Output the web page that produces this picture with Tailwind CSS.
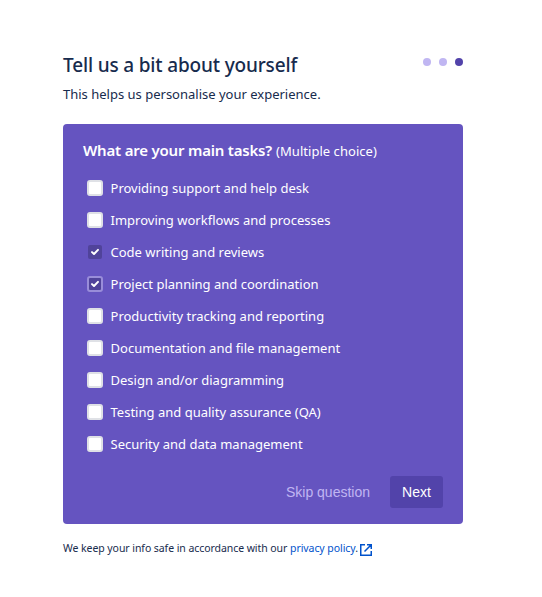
<!DOCTYPE html>
<html lang="en">
<head>
<meta charset="utf-8">
<title>Tell us a bit about yourself</title>
<script src="https://cdn.jsdelivr.net/npm/@tailwindcss/browser@4"></script>
</head>
<body class="bg-white text-[#172b4d] font-['Noto_Sans','Open_Sans',sans-serif]">
<main class="ml-[63px] w-[400px] pt-[53px]">
  <header class="flex h-6 items-start justify-between">
    <h1 class="whitespace-nowrap text-[19px] font-medium leading-6 tracking-[-0.16px]">Tell us a bit about yourself</h1>
    <div class="flex gap-2 pt-[5px]">
      <i class="size-2 rounded-full bg-[#c0b6f2]"></i>
      <i class="size-2 rounded-full bg-[#c0b6f2]"></i>
      <i class="size-2 rounded-full bg-[#5243aa]"></i>
    </div>
  </header>
  <p class="mt-[7px] h-5 whitespace-nowrap text-[13px] leading-5">This helps us personalise your experience.</p>
  <section class="mt-5 flex h-[400px] flex-col rounded-[4px] bg-[#6554c0] px-5 pt-4 pb-4 text-white">
    <h2 class="flex h-5 items-baseline gap-1 whitespace-nowrap leading-5"><span class="text-[15px] font-semibold tracking-[-0.2px]">What are your main tasks?</span><span class="text-[13px] tracking-[0.04px]">(Multiple choice)</span></h2>
    <div class="mt-3 flex flex-col pl-1 text-[13px] tracking-[0.01px] [&_label>span:last-child]:pt-0.5">
      <label class="flex h-8 items-center gap-[7.5px]"><span class="size-4 rounded-[3px] border-2 border-[#dfe1e6] bg-white"></span><span>Providing support and help desk</span></label>
      <label class="flex h-8 items-center gap-[7.5px]"><span class="size-4 rounded-[3px] border-2 border-[#dfe1e6] bg-white"></span><span>Improving workflows and processes</span></label>
      <label class="flex h-8 items-center gap-[7.5px]"><svg class="size-4" viewBox="0 0 16 16" fill="none"><rect x="1" y="1" width="14" height="14" rx="2" fill="#50439a"/><path d="M5 8.1 7 10l4-4.1" stroke="#fff" stroke-width="2" stroke-linecap="round" stroke-linejoin="round"/></svg><span>Code writing and reviews</span></label>
      <label class="flex h-8 items-center gap-[7.5px]"><svg class="size-4" viewBox="0 0 16 16" fill="none"><rect x="1" y="1" width="14" height="14" rx="2" fill="#50439a" stroke="#998dd9" stroke-width="2"/><path d="M5 8.1 7 10l4-4.1" stroke="#fff" stroke-width="2" stroke-linecap="round" stroke-linejoin="round"/></svg><span>Project planning and coordination</span></label>
      <label class="flex h-8 items-center gap-[7.5px]"><span class="size-4 rounded-[3px] border-2 border-[#dfe1e6] bg-white"></span><span>Productivity tracking and reporting</span></label>
      <label class="flex h-8 items-center gap-[7.5px]"><span class="size-4 rounded-[3px] border-2 border-[#dfe1e6] bg-white"></span><span>Documentation and file management</span></label>
      <label class="flex h-8 items-center gap-[7.5px]"><span class="size-4 rounded-[3px] border-2 border-[#dfe1e6] bg-white"></span><span>Design and/or diagramming</span></label>
      <label class="flex h-8 items-center gap-[7.5px]"><span class="size-4 rounded-[3px] border-2 border-[#dfe1e6] bg-white"></span><span>Testing and quality assurance (QA)</span></label>
      <label class="flex h-8 items-center gap-[7.5px]"><span class="size-4 rounded-[3px] border-2 border-[#dfe1e6] bg-white"></span><span>Security and data management</span></label>
    </div>
    <div class="mt-auto flex h-8 items-center justify-end gap-5 font-['Liberation_Sans',sans-serif] text-sm">
      <button class="text-[#c0b6f2]">Skip question</button>
      <button class="h-8 w-[53px] rounded-[3px] bg-[#5243aa]">Next</button>
    </div>
  </section>
  <footer class="mt-[14px] flex h-5 items-center whitespace-nowrap text-[10.5px] leading-5"><span class="tracking-[-0.065px]">We keep your info safe in accordance with our <a class="text-[#0052cc]">privacy policy</a>.</span><svg class="mt-1 ml-0.5 size-3 shrink-0" viewBox="0 0 12 12" fill="none" stroke="#0052cc" stroke-width="1.5"><path d="M5 .75H.75v10.5h10.5V7M7 .75h4.25V5M11 1 4.5 7.5"/></svg></footer>
</main>
</body>
</html>
